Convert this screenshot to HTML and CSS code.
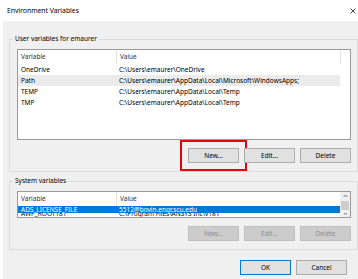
FILE: index.html
```html
<!DOCTYPE html>
<html>
<head>
  <title>Environment Variables</title>
  <link rel="stylesheet" href="styles.css">
</head>
<body>
  <div class="window">
    <div class="titlebar">
      <span class="title">Environment Variables</span>
      <svg class="close" width="6" height="6" viewBox="0 0 6 6">
        <path d="M0.5 0.5L5.5 5.5M5.5 0.5L0.5 5.5" stroke="#222" stroke-width="0.8" fill="none"/>
      </svg>
    </div>

    <div class="dialog">
      <fieldset class="group">
        <legend>User variables for emaurer</legend>
        <div class="listview user-list">
          <div class="lv-main">
            <div class="lv-head"><span class="col-var">Variable</span><span class="col-val">Value</span></div>
            <div class="lv-row"><span class="col-var">OneDrive</span><span class="col-val">C:\Users\emaurer\OneDrive</span></div>
            <div class="lv-row hover"><span class="col-var">Path</span><span class="col-val">C:\Users\emaurer\AppData\Local\Microsoft\WindowsApps;</span></div>
            <div class="lv-row"><span class="col-var">TEMP</span><span class="col-val">C:\Users\emaurer\AppData\Local\Temp</span></div>
            <div class="lv-row"><span class="col-var">TMP</span><span class="col-val">C:\Users\emaurer\AppData\Local\Temp</span></div>
          </div>
        </div>
        <div class="btn-row">
          <button class="btn marked">New...</button>
          <button class="btn">Edit...</button>
          <button class="btn">Delete</button>
        </div>
      </fieldset>

      <fieldset class="group system">
        <legend>System variables</legend>
        <div class="listview system-list">
          <div class="lv-main">
            <div class="lv-head"><span class="col-var">Variable</span><span class="col-val">Value</span></div>
            <div class="lv-row selected"><span class="col-var">ADS_LICENSE_FILE</span><span class="col-val">5512@bovin.engr.scu.edu</span></div>
            <div class="lv-row under"><span class="col-var">AWP_ROOT181</span><span class="col-val">C:\Program Files\ANSYS Inc\v181</span></div>
          </div>
          <div class="scrollbar">
            <svg class="arrow" width="9" height="8" viewBox="0 0 9 8">
              <path d="M2.5 5L4.5 3L6.5 5" stroke="#606060" stroke-width="0.9" fill="none"/>
            </svg>
            <div class="thumb"></div>
            <svg class="arrow" width="9" height="6" viewBox="0 0 9 6">
              <path d="M3 2L4.5 3.5L6 2" stroke="#606060" stroke-width="0.9" fill="none"/>
            </svg>
          </div>
        </div>
        <div class="btn-row">
          <button class="btn" disabled>New...</button>
          <button class="btn" disabled>Edit...</button>
          <button class="btn" disabled>Delete</button>
        </div>
      </fieldset>

      <div class="btn-row dialog-buttons">
        <button class="btn default">OK</button>
        <button class="btn">Cancel</button>
      </div>
    </div>
  </div>
</body>
</html>
```

FILE: styles.css
```css
body {
  margin: 0;
  font-family: "Noto Sans", "Liberation Sans", sans-serif;
  font-size: 6.5px;
  color: #000;
  background: #fff;
}
.window {
  width: 358px;
  height: 279px;
  overflow: hidden;
  display: flex;
  flex-direction: column;
}
.titlebar {
  height: 21px;
  flex-shrink: 0;
  display: flex;
  align-items: center;
  justify-content: space-between;
  padding: 0 2px 0 7px;
  background: #fff;
}
.title {
  font-size: 6.8px;
}
.dialog {
  flex: 1;
  margin-left: 3px;
  background: #f0f0f0;
  padding: 13px 0 0 6px;
  display: flex;
  flex-direction: column;
}
.group {
  margin: 0;
  min-width: 0;
  border: 1px solid #dcdcdc;
  padding: 5px 6px 8px 7px;
}
.group legend {
  line-height: 10px;
  padding: 0 2px;
  margin-left: -4px;
}
.group.system {
  margin-top: 4px;
}
.listview {
  display: flex;
  background: #fff;
  border: 1px solid #9a9a9a;
  overflow: hidden;
}
.user-list {
  height: 89px;
}
.system-list {
  height: 25px;
}
.lv-main {
  flex: 1;
  overflow: hidden;
}
.lv-head {
  height: 14px;
  display: flex;
  align-items: center;
  color: #333;
}
.lv-head .col-var,
.lv-head .col-val {
  border-right: 1px solid #e5e5e5;
  height: 14px;
  line-height: 14px;
}
.col-var {
  width: 95px;
  padding-left: 3px;
  flex-shrink: 0;
}
.col-val {
  width: 220px;
  padding-left: 3px;
  flex-shrink: 0;
  white-space: nowrap;
}
.lv-row {
  width: 322px;
  height: 11px;
  line-height: 11px;
  display: flex;
  white-space: nowrap;
}
.lv-row.hover {
  background: #ebebeb;
}
.lv-row.selected {
  height: 7px;
  line-height: 8px;
  overflow: hidden;
  background: #0078d7;
  color: #fff;
  position: relative;
  z-index: 1;
}
.lv-row.under {
  margin-top: -5px;
}
.scrollbar {
  width: 10px;
  background: #f0f0f0;
  display: flex;
  flex-direction: column;
  align-items: center;
  flex-shrink: 0;
}
.arrow {
  flex-shrink: 0;
}
.thumb {
  width: 8px;
  height: 9px;
  margin: 1px 0;
  background: #cdcdcd;
  flex-shrink: 0;
}
.btn-row {
  display: flex;
  justify-content: flex-end;
  gap: 5px;
  margin-top: 8px;
}
.btn {
  width: 51px;
  height: 15px;
  padding: 0;
  font-family: inherit;
  font-size: 6.5px;
  color: #000;
  background: #e1e1e1;
  border: 1px solid #adadad;
}
.btn:disabled {
  background: #cccccc;
  border-color: #bfbfbf;
  color: #8c8c8c;
}
.btn.marked {
  outline: 2px solid #e8000b;
  outline-offset: 6px;
}
.btn.default {
  border-color: #0078d7;
}
.dialog-buttons {
  margin-top: 10px;
  margin-right: 11px;
}
```
